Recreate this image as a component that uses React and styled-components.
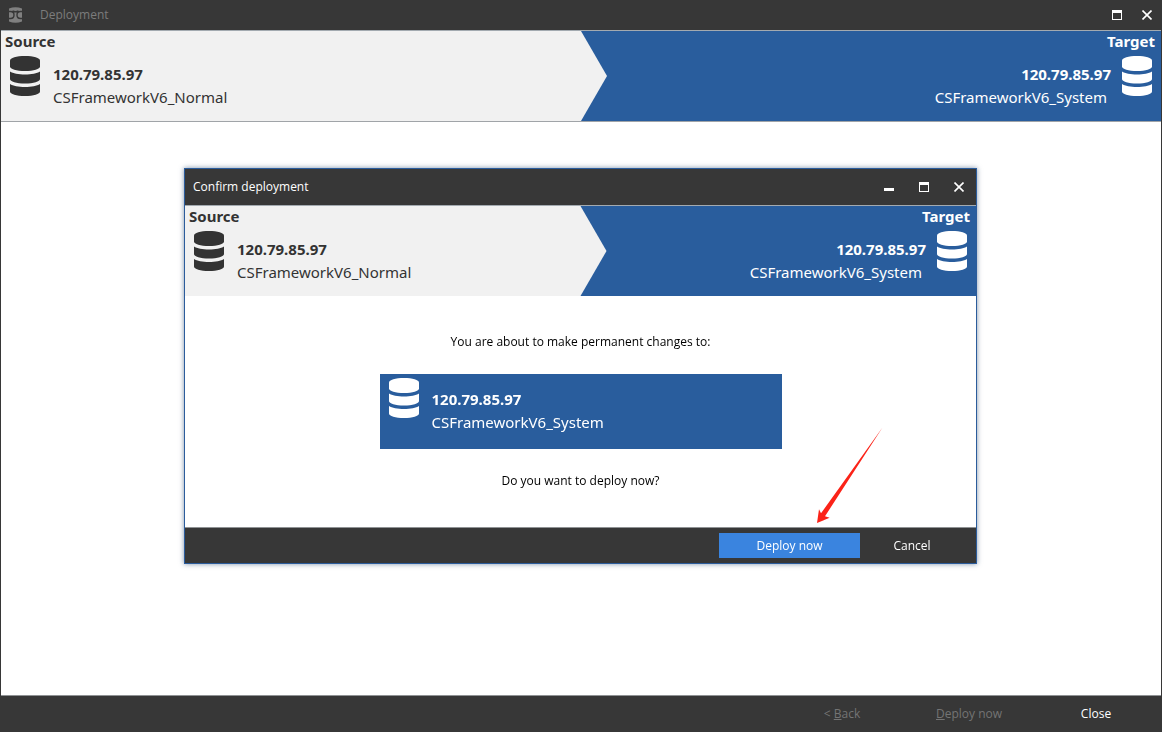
import React from 'react';
import styled, { createGlobalStyle, css } from 'styled-components';

const GlobalStyle = createGlobalStyle`
  * {
    box-sizing: border-box;
  }
  body {
    margin: 0;
    background-color: #fff;
    font-family: "Open Sans", "Noto Sans", sans-serif;
    font-size: 12px;
    line-height: 20px;
    color: #000;
  }
  h1, h2, p {
    margin: 0;
    font-size: inherit;
    font-weight: 400;
  }
`;

const Window = styled.div`
  display: flex;
  flex-direction: column;
  min-height: 100vh;
  border: 1px solid #373737;
  border-top: none;
  border-bottom: none;
`;

const TitleBar = styled.header`
  display: flex;
  align-items: center;
  height: ${props => props.$tall ? "36px" : "30px"};
  padding: 0 ${props => props.$tall ? "7px" : "4px"} 0 8px;
  background-color: #373737;
  color: ${props => props.$inactive ? "#7c7c7c" : "#fff"};
`;

const AppIcon = styled.svg`
  margin-right: 18px;
`;

const WindowButtons = styled.div`
  display: flex;
  gap: ${props => props.$wide ? "15px" : "10px"};
  margin-left: auto;
`;

const IconButton = styled.button`
  display: flex;
  align-items: center;
  justify-content: center;
  width: 20px;
  height: 20px;
  padding: 0;
  border: none;
  background: none;
  color: #fff;
`;

const Banner = styled.div`
  display: flex;
  border-top: 1px solid #a3aab0;
  border-bottom: ${props => props.$underline ? "1px solid #a0a4a8" : "none"};
  background-color: #295d9d;
`;

const Side = styled.section`
  flex: 1;
  height: 90px;
  font-family: "Noto Sans", "Open Sans", sans-serif;
  font-size: 15px;
`;

const SourceSide = styled(Side)`
  margin-right: -26px;
  padding-right: 26px;
  background-color: #f1f1f1;
  color: #333;
  clip-path: polygon(0 0, calc(100% - 26px) 0, 100% 50%, calc(100% - 26px) 100%, 0 100%);
`;

const TargetSide = styled(Side)`
  color: #fff;
  text-align: right;
`;

const SideLabel = styled.h2`
  padding: 0 6px 2px 4px;
  font-weight: 700;
  line-height: 20px;
`;

const ServerRow = styled.div`
  display: flex;
  align-items: flex-start;
  gap: 13px;
  padding: 3px 9px;
  ${props => props.$reverse && css`
    flex-direction: row-reverse;
    gap: 11px;
  `}
`;

const ServerText = styled.div`
  padding-top: ${props => props.$low ? "10px" : "7px"};
  font-family: "Noto Sans", "Open Sans", sans-serif;
  font-size: 15px;
  line-height: 23px;
`;

const ServerName = styled.div`
  font-weight: 700;
`;

const DatabaseName = styled.div`
  padding-right: 4px;
`;

const Content = styled.main`
  flex: 1;
`;

const Footer = styled.footer`
  display: flex;
  align-items: center;
  justify-content: flex-end;
  gap: ${props => props.$inDialog ? "2px" : "17px"};
  height: ${props => props.$inDialog ? "36px" : "37px"};
  padding: 0 ${props => props.$inDialog ? "14px" : "10px"} 0 10px;
  border-top: 1px solid #8f9294;
  background-color: #373737;
`;

const Button = styled.button`
  width: ${props => props.$width};
  height: 25px;
  padding: 0;
  border: none;
  background-color: ${props => props.$primary ? "#3a84df" : "transparent"};
  color: #fff;
  font: inherit;
  &:disabled {
    color: #747474;
  }
`;

const Overlay = styled.div`
  position: fixed;
  inset: 0;
  display: flex;
  align-items: center;
  justify-content: center;
  padding-right: 1px;
`;

const Dialog = styled.div`
  width: 100%;
  max-width: 793px;
  border: 1px solid #2b5c9c;
  background-color: #fff;
  box-shadow: 0 0 5px rgba(40, 70, 110, 0.6);
`;

const DialogBody = styled.div`
  position: relative;
  display: flex;
  flex-direction: column;
  align-items: center;
  gap: 22px;
  padding: 36px 20px;
`;

const TargetCard = styled.div`
  width: 402px;
  max-width: 100%;
  height: 75px;
  padding-top: 1px;
  background-color: #295d9d;
  color: #fff;
`;

const Arrow = styled.svg`
  position: absolute;
  right: 93px;
  bottom: 4px;
`;

function DatabaseIcon () {
  return (
    <svg width="30" height="40" viewBox="0 0 30 40" fill="currentColor" aria-hidden="true">
      <path d="M0 4.5C0 1.8 6.5 0 15 0s15 1.8 15 4.5v6C30 13 23.500 15 15 15S0 13 0 10.500z" />
      <path d="M0 15.500c3 2 8.500 3 15 3s12-1 15-3v7.500c0 2.600-6.500 4.500-15 4.500S0 25.600 0 23z" />
      <path d="M0 28c3 2 8.500 3 15 3s12-1 15-3v7.500c0 2.600-6.500 4.500-15 4.500S0 38.100 0 35.500z" />
    </svg>
  )
}

function MinimizeIcon () {
  return (
    <svg width="10" height="10" viewBox="0 0 10 10" aria-hidden="true">
      <path d="M0 6h10v3H0z" fill="currentColor" />
    </svg>
  )
}

function MaximizeIcon () {
  return (
    <svg width="10" height="10" viewBox="0 0 10 10" aria-hidden="true">
      <path d="M0 0h10v10H0zM1 3v6h8V3z" fill="currentColor" fillRule="evenodd" />
    </svg>
  )
}

function CloseIcon () {
  return (
    <svg width="10" height="10" viewBox="0 0 10 10" aria-hidden="true">
      <path d="M0.500 0.500l9 9M9.500 0.500l-9 9" stroke="currentColor" strokeWidth="1.600" />
    </svg>
  )
}

function Server ({ name, database, reverse, low }) {
  return (
    <ServerRow $reverse={reverse}>
      <DatabaseIcon />
      <ServerText $low={low}>
        <ServerName>{name}</ServerName>
        <DatabaseName>{database}</DatabaseName>
      </ServerText>
    </ServerRow>
  )
}

function DeploymentBanner ({ source, target, underline }) {
  return (
    <Banner $underline={underline}>
      <SourceSide>
        <SideLabel>Source</SideLabel>
        <Server {...source} />
      </SourceSide>
      <TargetSide>
        <SideLabel>Target</SideLabel>
        <Server {...target} reverse />
      </TargetSide>
    </Banner>
  )
}

const source = { name: '120.79.85.97', database: 'CSFrameworkV6_Normal' };
const target = { name: '120.79.85.97', database: 'CSFrameworkV6_System' };

function ConfirmDialog () {
  return (
    <Overlay>
      <Dialog role="dialog" aria-labelledby="confirm-title">
        <TitleBar $tall>
          <h2 id="confirm-title">Confirm deployment</h2>
          <WindowButtons $wide>
            <IconButton aria-label="Minimize"><MinimizeIcon /></IconButton>
            <IconButton aria-label="Maximize"><MaximizeIcon /></IconButton>
            <IconButton aria-label="Close"><CloseIcon /></IconButton>
          </WindowButtons>
        </TitleBar>
        <DeploymentBanner source={source} target={target} />
        <DialogBody>
          <p>You are about to make permanent changes to:</p>
          <TargetCard>
            <Server {...target} low />
          </TargetCard>
          <p>Do you want to deploy now?</p>
          <Arrow width="67" height="96" viewBox="0 0 67 96" aria-hidden="true">
            <path d="M1 96L3 82.300l2 4L66.500 0.500 9 89.300l4.600 1.400z" fill="#fb2318" />
          </Arrow>
        </DialogBody>
        <Footer $inDialog>
          <Button $width="141px" $primary>Deploy now</Button>
          <Button $width="100px">Cancel</Button>
        </Footer>
      </Dialog>
    </Overlay>
  )
}

function App () {
  return (
    <>
      <GlobalStyle />
      <Window>
        <TitleBar $inactive>
          <AppIcon width="13" height="16" viewBox="0 0 13 16" aria-hidden="true">
            <path d="M0 1.500Q6.500-1 13 1.500v13q-6.500 2.500-13 0z" fill="#808080" />
            <path d="M0 4.500h1.500q3.500 0 3.500 3.500t-3.500 3.500H0M13 4.500h-1.500Q8 4.500 8 8t3.500 3.500H13M3.500 4q3 1.500 6 0" fill="none" stroke="#373737" strokeWidth="1.400" />
          </AppIcon>
          <h1>Deployment</h1>
          <WindowButtons>
            <IconButton aria-label="Maximize"><MaximizeIcon /></IconButton>
            <IconButton aria-label="Close"><CloseIcon /></IconButton>
          </WindowButtons>
        </TitleBar>
        <DeploymentBanner source={source} target={target} underline />
        <Content />
        <Footer>
          <Button $width="110px" disabled>&lt; <u>B</u>ack</Button>
          <Button $width="110px" disabled><u>D</u>eploy now</Button>
          <Button $width="110px">Close</Button>
        </Footer>
      </Window>
      <ConfirmDialog />
    </>
  )
}

export default App;
